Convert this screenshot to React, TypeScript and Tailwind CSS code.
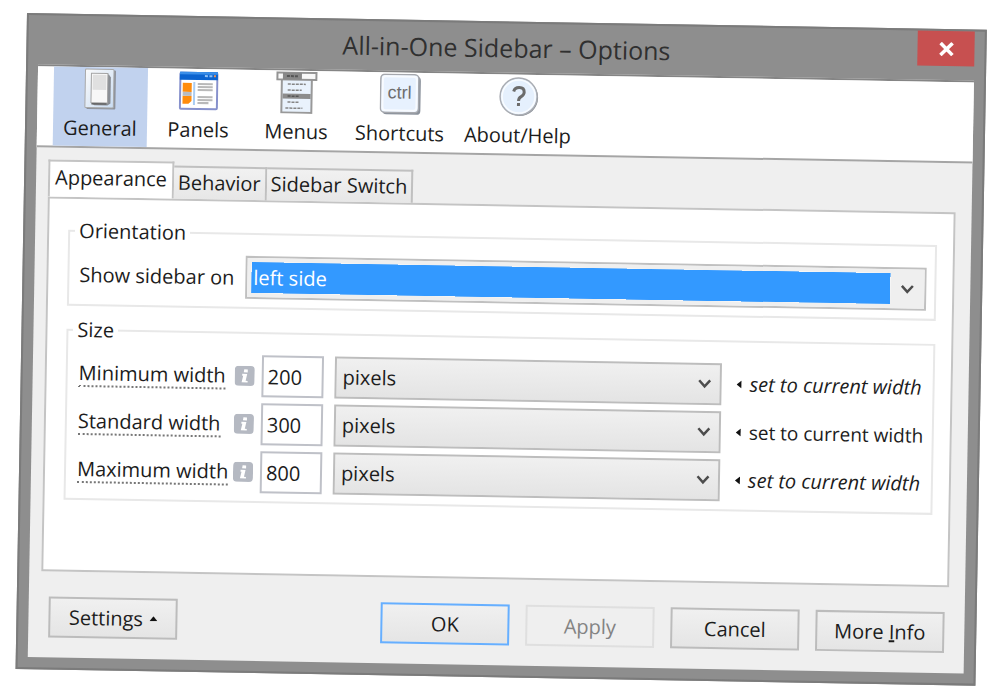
import { useState } from "react";
import type { ReactNode } from "react";

const GeneralIcon = () => (
  <svg width="34" height="42" viewBox="0 0 34 42">
    <defs>
      <linearGradient id="plate" x1="0" y1="0" x2="1" y2="1">
        <stop offset="0" stopColor="#fbfbfb" />
        <stop offset="1" stopColor="#c9dcf2" />
      </linearGradient>
    </defs>
    <rect x="3" y="2" width="29" height="39" rx="1" fill="#8d929b" />
    <rect x="1.5" y="1" width="28.5" height="38.5" rx="1" fill="url(#plate)" stroke="#a9a9a9" />
    <path d="M8 6h17l2 3v26l-3 2H11l-3-2z" fill="#8a8e94" />
    <rect x="7.5" y="5" width="16.5" height="29.5" fill="#f7f7f7" stroke="#a5a5a5" />
    <rect x="9" y="6.5" width="13.5" height="15" fill="#e0e0e0" />
    <path d="M8 35.5h15" stroke="#666" strokeWidth="1.5" />
  </svg>
);

const PanelsIcon = () => (
  <svg width="40" height="42" viewBox="0 0 40 42">
    <rect x="1.5" y="3" width="37" height="36" rx="1" fill="#fff" stroke="#8791cc" strokeWidth="2" />
    <path d="M1 2h38v8H1z" fill="#0b63cf" />
    <path d="M1 2h38v2.5H1z" fill="#3a8ee8" />
    <path d="M26 6h3M30.500 6h3" stroke="#8fc0f5" strokeWidth="2" />
    <path d="M35 6h2" stroke="#ee9050" strokeWidth="2" />
    <path d="M4 13h9v9H4zM4 26h9v5l-3 3H4z" fill="#ff8c0c" />
    <path d="M4 22h9v4H4z" fill="#b9bcc2" />
    <path d="M15.500 12v23" stroke="#a9cdf3" strokeWidth="2" />
    <path d="M19 14h15M19 17h15M19 20h15M19 27h15M19 30h15M19 33h11" stroke="#b9b9b9" strokeWidth="2.2" />
  </svg>
);

const MenusIcon = () => (
  <svg width="42" height="42" viewBox="0 0 42 42">
    <rect x="6" y="7" width="30" height="34" fill="#e9f2fc" stroke="#999" strokeWidth="2" />
    <rect x="1.5" y="1" width="39" height="7" fill="#f8f8f8" stroke="#949494" strokeWidth="2" />
    <path d="M7 1h19v7H7z" fill="#888" />
    <path d="M11 4.500h11" stroke="#555" strokeWidth="2" strokeDasharray="3 1" />
    <path d="M7 22h28v5H7z" fill="#8c8c8c" />
    <path d="M12 24.500h11" stroke="#555" strokeWidth="1.5" strokeDasharray="3 1" />
    <path d="M12 12.500h18M12 18.500h14M12 30.500h11M10 36.500h17" stroke="#858585" strokeWidth="1.5" strokeDasharray="3 1" />
  </svg>
);

const ShortcutsIcon = () => (
  <svg width="42" height="42" viewBox="0 0 42 42">
    <rect x="3" y="3" width="38" height="38" rx="4" fill="#8b929c" />
    <rect x="1" y="1" width="38" height="38" rx="4" fill="#e7f1fe" stroke="#a6a8ad" strokeWidth="1.5" />
    <rect x="3" y="3" width="34" height="34" rx="3" fill="none" stroke="#f8fbff" strokeWidth="2" />
    <text x="20" y="25" textAnchor="middle" fontFamily="Liberation Sans, sans-serif" fontSize="18" fill="#6e6e6e">
      ctrl
    </text>
  </svg>
);

const HelpIcon = () => (
  <svg width="42" height="42" viewBox="0 0 42 42">
    <circle cx="22" cy="22" r="18.5" fill="#858b93" />
    <circle cx="21" cy="21" r="18.5" fill="#e5f0fd" stroke="#aaadb3" strokeWidth="1.5" />
    <circle cx="21" cy="21" r="16.5" fill="none" stroke="#f9fcff" strokeWidth="1.5" />
    <path d="M16 16q1-4 5.500-4 5 0 5 4.500 0 2.500-3 4.500-2.500 1.500-2.500 4.500" fill="none" stroke="#6b6b6b" strokeWidth="3" />
    <rect x="19.5" y="27.5" width="3" height="3" fill="#6b6b6b" />
  </svg>
);

const Chevron = () => (
  <svg width="14" height="10" viewBox="0 0 14 10" className="pointer-events-none col-start-1 row-start-1 mr-[10px] self-center justify-self-end">
    <path d="M1.500 1.500L7 7.500l5.500-6" fill="none" stroke="#4d4d4d" strokeWidth="2.5" />
  </svg>
);

const categories = [
  { name: "General", icon: <GeneralIcon /> },
  { name: "Panels", icon: <PanelsIcon /> },
  { name: "Menus", icon: <MenusIcon /> },
  { name: "Shortcuts", icon: <ShortcutsIcon /> },
  { name: "About/Help", icon: <HelpIcon /> },
];

const tabs = ["Appearance", "Behavior", "Sidebar Switch"];

const sizes = [
  { id: "min", label: "Minimum width", value: "200", italic: true },
  { id: "std", label: "Standard width", value: "300", italic: false },
  { id: "max", label: "Maximum width", value: "800", italic: true },
];

const Group = ({ title, children }: { title: string; children: ReactNode }) => (
  <fieldset className="min-w-0 border-2 border-[#e8e8e8]">
    <legend className="ml-[5px] px-1 leading-7">{title}</legend>
    {children}
  </fieldset>
);

const SizeRow = ({ id, label, value, italic }: { id: string; label: string; value: string; italic: boolean }) => {
  const [width, setWidth] = useState(value);

  return (
    <div className="flex h-[42px] items-center">
      <div className="w-[156px] shrink-0">
        <label htmlFor={id} className="inline-block border-b-2 border-dotted border-[#777] leading-6">
          {label}
        </label>
      </div>
      <svg width="20" height="20" viewBox="0 0 20 20" className="mr-[7px] shrink-0">
        <rect width="20" height="20" rx="4" fill="#b5b9c2" />
        <path d="M9.500 3.500h3.500v3H9zM7.500 8h5l-1.500 7h2v1.500H7L8.500 10h-1z" fill="#fff" />
      </svg>
      <input
        id={id}
        value={width}
        onChange={(e) => setWidth(e.target.value)}
        className="h-full w-[62px] shrink-0 border-2 border-[#bfc1c8] bg-white px-1 outline-none"
      />
      <div className="ml-[11px] grid h-full flex-1">
        <select
          aria-label={`${label} unit`}
          className="col-start-1 row-start-1 appearance-none border-2 border-[#bdbdbd] bg-linear-to-b from-[#f0f0f0] to-[#e4e4e4] px-1.5 outline-none"
        >
          <option>pixels</option>
          <option>percent</option>
        </select>
        <Chevron />
      </div>
      <a href="#" className="ml-[15px] flex w-[190px] shrink-0 items-center gap-2 whitespace-nowrap">
        <svg width="5" height="8" viewBox="0 0 5 8">
          <path d="M5 0v8L0 4z" fill="#111" />
        </svg>
        <span className={italic ? "text-[20px] italic" : "text-[19px]"}>set to current width</span>
      </a>
    </div>
  );
};

const dialogButton = "h-[41px] w-[129px] border-2 border-[#bcbcbc] bg-linear-to-b from-[#f0f0f0] to-[#e5e5e5]";

const App = () => {
  const [category, setCategory] = useState("General");
  const [tab, setTab] = useState("Appearance");

  return (
    <div className="min-h-screen overflow-hidden bg-white pt-[13px] pr-[13px] pb-3 pl-[27px] font-['Open_Sans','Noto_Sans',sans-serif] text-[20px] text-[#1c1c1c]">
      <div className="origin-top-left rotate-1 border-2 border-[#7b7b7b] bg-[#8e8e8e] px-[10px] pb-[10px]">
        <header className="grid h-[49px] grid-cols-[1fr_auto_1fr]">
          <h1 className="col-start-2 self-center text-[25px] text-[#303030]">All-in-One Sidebar – Options</h1>
          <button aria-label="Close" className="flex h-[35px] w-[57px] items-center justify-center justify-self-end bg-[#c75050]">
            <svg width="16" height="14" viewBox="0 0 16 14">
              <path d="M2 1l12 12M14 1L2 13" stroke="#fff" strokeWidth="3.5" />
            </svg>
          </button>
        </header>

        <div className="border-t-2 border-[#858585] bg-[#efefef]">
          <nav className="flex gap-1 border-b-2 border-[#a5a5a5] bg-white pl-4">
            {categories.map((item) => (
              <button
                key={item.name}
                onClick={() => setCategory(item.name)}
                className={
                  item.name === category
                    ? "flex min-w-[94px] flex-col items-center bg-[#c1d2ee] px-2 pt-px pb-1"
                    : "flex min-w-[94px] flex-col items-center px-2 pt-px pb-1"
                }
              >
                {item.icon}
                <span className="mt-1 leading-7">{item.name}</span>
              </button>
            ))}
          </nav>

          <div className="pt-3 pr-4 pl-3">
            <div role="tablist" className="flex items-end">
              {tabs.map((name) => (
                <button
                  key={name}
                  role="tab"
                  aria-selected={name === tab}
                  onClick={() => setTab(name)}
                  className={
                    name === tab
                      ? "h-[37px] border-2 border-b-0 border-[#c4c4c4] bg-white px-[5px] pb-1"
                      : "h-[33px] border-2 border-b-0 border-l-0 border-[#c0c0c0] bg-linear-to-b from-[#f1f1f1] to-[#e7e7e7] px-1 pb-1"
                  }
                >
                  {name}
                </button>
              ))}
            </div>

            <main className="space-y-[10px] border-2 border-[#c4c4c4] bg-white pt-[18px] pr-4 pb-[70px] pl-[19px]">
              <Group title="Orientation">
                <div className="flex items-center pt-2 pr-2 pb-2 pl-[10px]">
                  <label htmlFor="side" className="w-[166px] shrink-0">
                    Show sidebar on
                  </label>
                  <div className="grid h-[43px] flex-1 border-2 border-[#c0c0c0]">
                    <select
                      id="side"
                      className="col-start-1 row-start-1 appearance-none border-4 border-r-[34px] border-[#efefef] bg-[#3399ff] bg-clip-padding px-0.5 text-white outline-none"
                    >
                      <option>left side</option>
                      <option>right side</option>
                    </select>
                    <Chevron />
                  </div>
                </div>
              </Group>

              <Group title="Size">
                <div className="space-y-[6px] pt-2 pr-[6px] pb-2 pl-[11px]">
                  {sizes.map((row) => (
                    <SizeRow key={row.id} {...row} />
                  ))}
                </div>
              </Group>
            </main>
          </div>

          <footer className="flex gap-4 px-5 pt-[25px] pb-5">
            <button className={`${dialogButton} mr-auto flex items-center justify-center gap-1.5`}>
              Settings
              <svg width="8" height="5" viewBox="0 0 8 5">
                <path d="M0 5h8L4 0z" fill="#111" />
              </svg>
            </button>
            <button className="h-[41px] w-[129px] border-2 border-[#66afff] bg-linear-to-b from-[#f0f0f0] to-[#e5e5e5]">OK</button>
            <button disabled className="h-[41px] w-[129px] border-2 border-[#dfdfdf] text-[#838383]">
              Apply
            </button>
            <button className={dialogButton}>Cancel</button>
            <button className={dialogButton}>
              More <u>I</u>nfo
            </button>
          </footer>
        </div>
      </div>
    </div>
  );
};

export default App;
